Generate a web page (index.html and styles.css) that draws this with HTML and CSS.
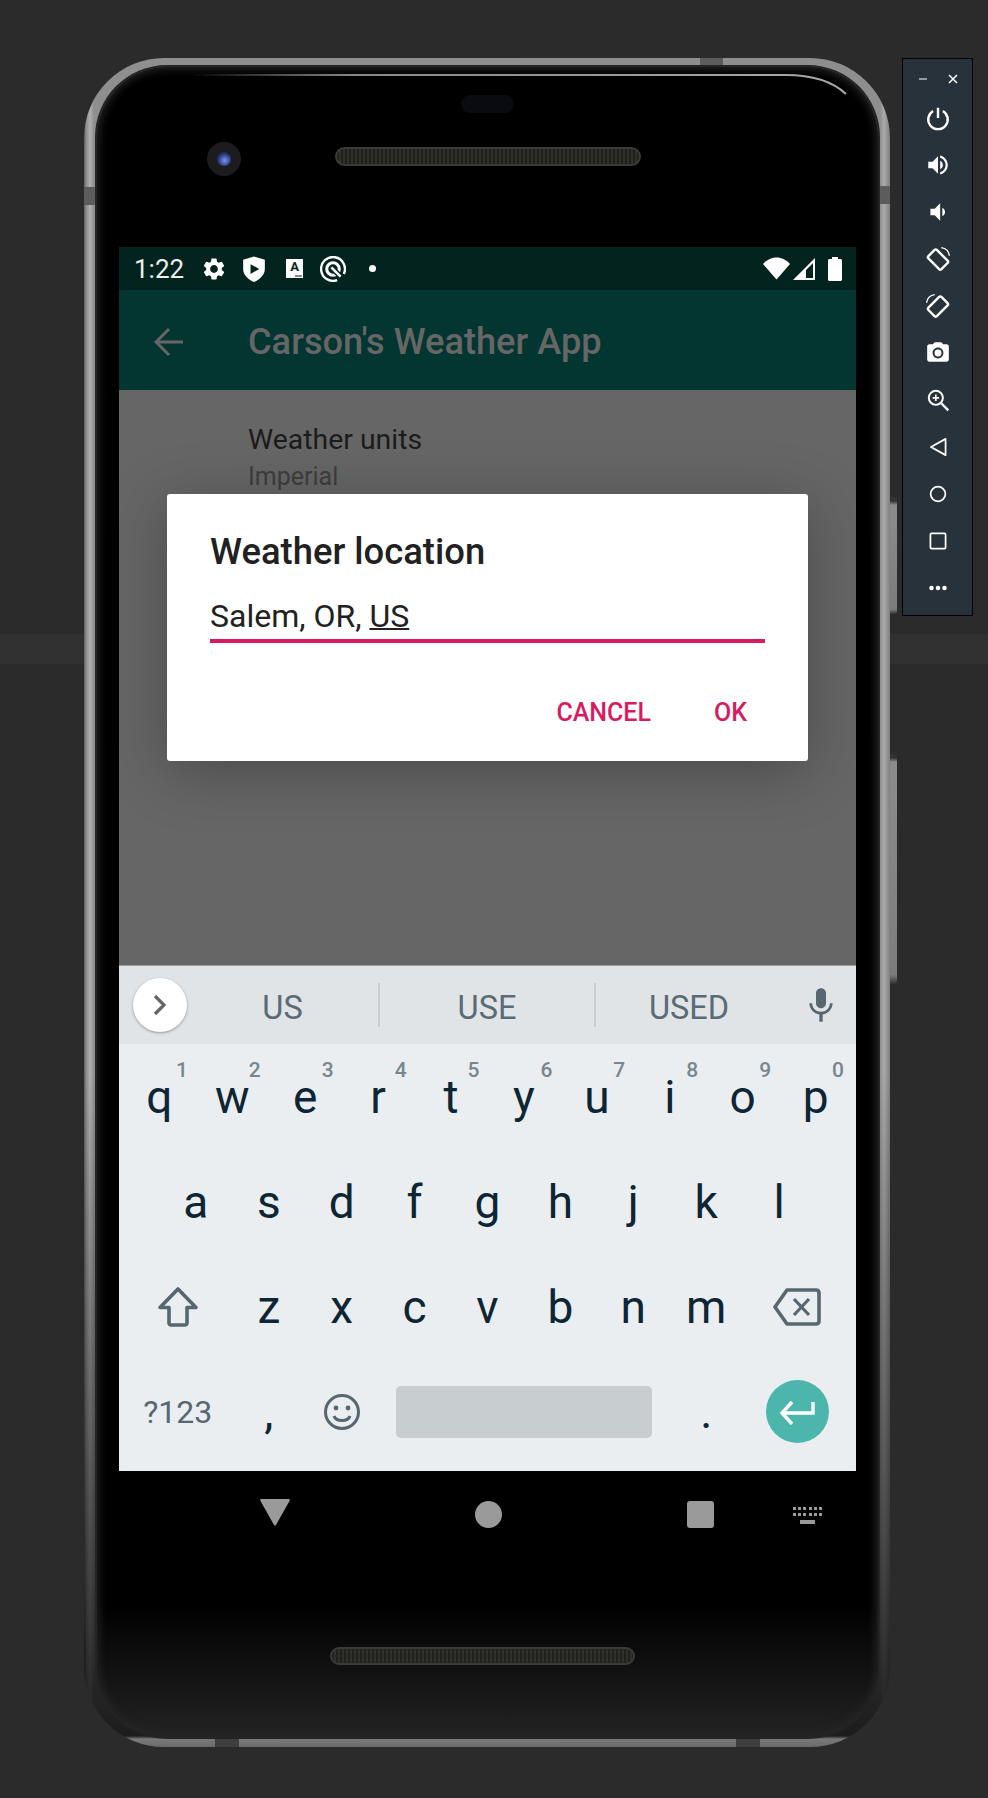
FILE: index.html
```html
<!DOCTYPE html>
<html lang="en">
<head>
	<meta charset="UTF-8">
	<title>Carson's Weather App</title>
	<link rel="stylesheet" href="styles.css">
</head>
<body>
<div class="phone">
	<!-- bits of the metal frame -->
	<span class="notch notch-left"></span>
	<span class="notch notch-right"></span>
	<span class="notch notch-top"></span>
	<span class="notch notch-bottom-a"></span>
	<span class="notch notch-bottom-b"></span>
	<span class="side-btn power-btn"></span>
	<span class="side-btn volume-btn"></span>

	<div class="bezel">
		<svg class="glass-line" width="782" height="40" viewBox="0 0 782 40">
			<defs>
				<linearGradient id="glassFade" x1="0" x2="1" y1="0" y2="0">
					<stop offset="0" stop-color="#999" stop-opacity="0"/>
					<stop offset="0.25" stop-color="#888"/>
					<stop offset="1" stop-color="#aaa"/>
				</linearGradient>
			</defs>
			<path d="M96 8 H690 C715 8 735 13 750 27" fill="none" stroke="url(#glassFade)" stroke-width="2"/>
		</svg>
		<div class="bezel-top">
			<div class="sensor"></div>
			<div class="bezel-row">
				<div class="camera"><span class="lens"></span></div>
				<div class="speaker speaker-top"></div>
			</div>
		</div>

		<div class="screen">
			<div class="status-bar">
				<span class="time">1:22</span>
				<svg class="st-icon gear" viewBox="0 0 24 24"><path d="M19.14 12.94c.04-.3.06-.61.06-.94 0-.32-.02-.64-.07-.94l2.03-1.58c.18-.14.23-.41.12-.61l-1.92-3.32c-.12-.22-.37-.29-.59-.22l-2.39.96c-.5-.38-1.03-.7-1.62-.94l-.36-2.54c-.04-.24-.24-.41-.48-.41h-3.84c-.24 0-.43.17-.47.41l-.36 2.54c-.59.24-1.13.57-1.62.94l-2.39-.96c-.22-.08-.47 0-.59.22L2.74 8.87c-.12.21-.08.47.12.61l2.03 1.58c-.05.3-.09.63-.09.94s.02.64.07.94l-2.03 1.58c-.18.14-.23.41-.12.61l1.92 3.32c.12.22.37.29.59.22l2.39-.96c.5.38 1.03.7 1.62.94l.36 2.54c.05.24.24.41.48.41h3.84c.24 0 .44-.17.47-.41l.36-2.54c.59-.24 1.13-.56 1.62-.94l2.39.96c.22.08.47 0 .59-.22l1.92-3.32c.12-.22.07-.47-.12-.61l-2.01-1.58zM12 15.6c-1.98 0-3.6-1.62-3.6-3.6s1.62-3.6 3.6-3.6 3.6 1.62 3.6 3.6-1.62 3.6-3.6 3.6z"/></svg>
				<svg class="st-icon shield" viewBox="0 0 24 24"><path fill-rule="evenodd" d="M12 .5 L22 3.500 V12 C22 17.500 17.500 21.500 12 24 C6.500 21.500 2 17.500 2 12 V3.500 Z M8.800 7.500 V16.500 L16.800 12 Z"/></svg>
				<span class="a-box">A<i></i></span>
				<svg class="st-icon q-icon" viewBox="0 0 24 24">
					<path d="M22 16.600 A11 11 0 1 0 15.800 22.300" fill="none" stroke="#fff" stroke-width="2.200"/>
					<circle cx="12" cy="12" r="5.800" fill="none" stroke="#fff" stroke-width="2.800"/>
					<path d="M10 10 L20 20" stroke="#03241e" stroke-width="5"/>
					<path d="M10.500 10.500 L19 19" stroke="#fff" stroke-width="2.400"/>
				</svg>
				<span class="st-dot"></span>
				<span class="st-right">
					<svg class="wifi" width="27" height="23" viewBox="0 0 27 23"><path d="M13.500 22.500 L0 7 C3.500 3 8.500 .5 13.500 .5 S23.500 3 27 7 Z"/></svg>
					<svg class="signal" width="22" height="22" viewBox="0 0 22 22"><path fill-rule="evenodd" d="M22 0 V22 H0 Z M20 5 L13 12 V20 H20 Z"/></svg>
					<svg class="battery" width="14" height="24" viewBox="0 0 14 24"><path d="M4 0 H10 V2 H12.500 C13.300 2 14 2.700 14 3.500 V22.500 C14 23.300 13.300 24 12.500 24 H1.500 C.7 24 0 23.300 0 22.500 V3.500 C0 2.700 .7 2 1.500 2 H4 Z"/></svg>
				</span>
			</div>

			<div class="app-bar">
				<svg class="back-arrow" width="30" height="30" viewBox="0 0 30 30"><path d="M29 15 H3 M15 2 L2 15 L15 28" fill="none" stroke="#666" stroke-width="3"/></svg>
				<span class="app-title">Carson's Weather App</span>
			</div>

			<main class="settings">
				<div class="pref-title">Weather units</div>
				<div class="pref-value">Imperial</div>

				<div class="dialog">
					<h2 class="dialog-title">Weather location</h2>
					<div class="dialog-input">Salem, OR, <u>US</u></div>
					<div class="dialog-actions">
						<span>CANCEL</span>
						<span>OK</span>
					</div>
				</div>
			</main>

			<div class="keyboard">
				<div class="suggestions">
					<div class="expand">
						<svg width="20" height="24" viewBox="0 0 20 24"><path d="M5 3 L14 12 L5 21" fill="none" stroke="#666" stroke-width="3.200"/></svg>
					</div>
					<span class="word word-first">US</span>
					<span class="word word-mid">USE</span>
					<span class="word word-last">USED</span>
					<svg class="mic" width="40" height="40" viewBox="0 0 24 24"><path d="M12 14c1.660 0 3-1.340 3-3V5c0-1.660-1.340-3-3-3S9 3.340 9 5v6c0 1.660 1.340 3 3 3zm5.300-3c0 3-2.540 5.100-5.300 5.100S6.700 14 6.700 11H5c0 3.410 2.720 6.230 6 6.720V22h2v-4.280c3.280-.48 6-3.300 6-6.720h-1.700z"/></svg>
				</div>

				<div class="key-row">
					<span class="key">q<sup>1</sup></span>
					<span class="key">w<sup>2</sup></span>
					<span class="key">e<sup>3</sup></span>
					<span class="key">r<sup>4</sup></span>
					<span class="key">t<sup>5</sup></span>
					<span class="key">y<sup>6</sup></span>
					<span class="key">u<sup>7</sup></span>
					<span class="key">i<sup>8</sup></span>
					<span class="key">o<sup>9</sup></span>
					<span class="key">p<sup>0</sup></span>
				</div>
				<div class="key-row row-home">
					<span class="key">a</span>
					<span class="key">s</span>
					<span class="key">d</span>
					<span class="key">f</span>
					<span class="key">g</span>
					<span class="key">h</span>
					<span class="key">j</span>
					<span class="key">k</span>
					<span class="key">l</span>
				</div>
				<div class="key-row row-shift">
					<span class="key">
						<svg width="44" height="44" viewBox="0 0 44 44"><path d="M22 4 L40 22.500 H31 V38 C31 39 30 40 29 40 H15 C14 40 13 39 13 38 V22.500 H4 Z" fill="none" stroke="#566770" stroke-width="3.600" stroke-linejoin="round"/></svg>
					</span>
					<span class="key">z</span>
					<span class="key">x</span>
					<span class="key">c</span>
					<span class="key">v</span>
					<span class="key">b</span>
					<span class="key">n</span>
					<span class="key">m</span>
					<span class="key">
						<svg width="48" height="38" viewBox="0 0 48 38"><path d="M14 2 H43 C45 2 46 3 46 5 V33 C46 35 45 36 43 36 H14 L2 19 Z" fill="none" stroke="#566770" stroke-width="3.600" stroke-linejoin="round"/><path d="M21 11 L36 27 M36 11 L21 27" stroke="#566770" stroke-width="3.200"/></svg>
					</span>
				</div>
				<div class="key-row row-bottom">
					<span class="key key-symbols">?123</span>
					<span class="key">,</span>
					<span class="key">
						<svg width="38" height="38" viewBox="0 0 38 38"><circle cx="19" cy="19" r="16.500" fill="none" stroke="#566770" stroke-width="3"/><circle cx="13" cy="15" r="2.400" fill="#566770"/><circle cx="25" cy="15" r="2.400" fill="#566770"/><path d="M11 23 C13 29 25 29 27 23" fill="none" stroke="#566770" stroke-width="3"/></svg>
					</span>
					<span class="key"><span class="space-bar"></span></span>
					<span class="key">.</span>
					<span class="key">
						<span class="enter">
							<svg width="36" height="26" viewBox="0 0 36 26"><path d="M34 3 V14 H4 M13 3 L3 14 L13 25" fill="none" stroke="#fff" stroke-width="3.400"/></svg>
						</span>
					</span>
				</div>
			</div>
		</div>

		<div class="nav-bar">
			<svg class="nav-back" width="30" height="27" viewBox="0 0 30 27"><path d="M1 0 H29 C30 0 30 1 29.500 2 L16 26 C15.500 27 14.500 27 14 26 L.5 2 C0 1 0 0 1 0 Z"/></svg>
			<span class="nav-home"></span>
			<span class="nav-recent"></span>
			<svg class="nav-ime" width="29" height="17" viewBox="0 0 29 17">
				<path d="M0 0h3v3H0zM5 0h3v3H5zM10 0h3v3h-3zM16 0h3v3h-3zM21 0h3v3h-3zM26 0h3v3h-3zM0 6h3v3H0zM5 6h3v3H5zM10 6h3v3h-3zM16 6h3v3h-3zM21 6h3v3h-3zM26 6h3v3h-3zM7 13h15v4H7z"/>
			</svg>
		</div>

		<div class="speaker speaker-bottom"></div>
	</div>
</div>

<aside class="emu-panel">
	<div class="emu-head">
		<svg width="14" height="14" viewBox="0 0 14 14"><path d="M3 7 H11" stroke="#b5bcc0" stroke-width="1.500"/></svg>
		<svg width="14" height="14" viewBox="0 0 14 14"><path d="M3 3 L11 11 M11 3 L3 11" stroke="#fff" stroke-width="1.500"/></svg>
	</div>
	<svg class="emu-icon" viewBox="0 0 24 24"><path d="M12 2.500 V12 M7.500 5.500 A9 9 0 1 0 16.500 5.500" fill="none" stroke="#fff" stroke-width="2.200"/></svg>
	<svg class="emu-icon" viewBox="0 0 24 24"><path d="M3 9v6h4l5 5V4L7 9H3zm13.500 3c0-1.770-1.020-3.290-2.500-4.030v8.050c1.480-.73 2.500-2.250 2.500-4.020z"/><path d="M14 3.230v2.060c2.890.86 5 3.540 5 6.710s-2.110 5.850-5 6.710v2.060c4.010-.91 7-4.490 7-8.770s-2.990-7.860-7-8.770z"/></svg>
	<svg class="emu-icon" viewBox="0 0 24 24"><path d="M18.500 12c0-1.770-1.020-3.290-2.500-4.030v8.050c1.480-.73 2.500-2.250 2.500-4.020zM5 9v6h4l5 5V4L9 9H5z"/></svg>
	<svg class="emu-icon" viewBox="0 0 24 24"><rect x="6.500" y="4" width="11" height="17" rx="1.500" transform="rotate(-45 12 12.500)" fill="none" stroke="#fff" stroke-width="2.200"/><path d="M15 1.500 C19 2 22 5 22.500 9" fill="none" stroke="#fff" stroke-width="1.300"/></svg>
	<svg class="emu-icon" viewBox="0 0 24 24"><rect x="6.500" y="4" width="11" height="17" rx="1.500" transform="rotate(45 12 12.500)" fill="none" stroke="#fff" stroke-width="2.200"/><path d="M9 1.500 C5 2 2 5 1.500 9" fill="none" stroke="#fff" stroke-width="1.300"/></svg>
	<svg class="emu-icon" viewBox="0 0 24 24"><circle cx="12" cy="12" r="3.200"/><path d="M9 2L7.170 4H4c-1.100 0-2 .9-2 2v12c0 1.100.9 2 2 2h16c1.100 0 2-.9 2-2V6c0-1.100-.9-2-2-2h-3.170L15 2H9zm3 15c-2.760 0-5-2.240-5-5s2.240-5 5-5 5 2.240 5 5-2.240 5-5 5z"/></svg>
	<svg class="emu-icon" viewBox="0 0 24 24"><circle cx="10" cy="10" r="6.500" fill="none" stroke="#fff" stroke-width="1.800"/><path d="M15 15 L21.500 21.500" stroke="#fff" stroke-width="2.200"/><path d="M10 7 V13 M7 10 H13" stroke="#fff" stroke-width="1.500"/></svg>
	<svg class="emu-icon" viewBox="0 0 24 24"><path d="M19 4.500 V19.500 L5.500 12 Z" fill="none" stroke="#fff" stroke-width="1.600" stroke-linejoin="round"/></svg>
	<svg class="emu-icon" viewBox="0 0 24 24"><circle cx="12" cy="12" r="6.800" fill="none" stroke="#fff" stroke-width="1.600"/></svg>
	<svg class="emu-icon" viewBox="0 0 24 24"><rect x="5" y="5" width="14" height="14" rx="1" fill="none" stroke="#fff" stroke-width="1.600"/></svg>
	<svg class="emu-icon" viewBox="0 0 24 24"><circle cx="6" cy="12" r="2.100"/><circle cx="12" cy="12" r="2.100"/><circle cx="18" cy="12" r="2.100"/></svg>
</aside>
</body>
</html>
```

FILE: styles.css
```css
* {
	box-sizing: border-box;
}

body {
	margin: 0;
	height: 1798px;
	padding: 58px 0 0 84px;
	display: flex;
	align-items: flex-start;
	overflow: hidden;
	font-family: Roboto, "Liberation Sans", sans-serif;
	/* the lighter strip behind the phone */
	background: linear-gradient(#2b2b2b 634px, #313131 634px, #313131 664px, #2b2b2b 664px);
}

/* ---------- phone hardware ---------- */
.phone {
	position: relative;
	width: 806px;
	height: 1689px;
	padding: 9px 12px 10px 13px;
	border-radius: 80px;
	background:
		linear-gradient(rgba(0, 0, 0, 0) 60%, rgba(0, 0, 0, .8) calc(100% - 11px), rgba(0, 0, 0, .15) calc(100% - 8px), rgba(0, 0, 0, .25) 100%),
		linear-gradient(90deg, #5a5a5a, #8a8a8a 2px, #b0b0b0 6px, #8f8f8f 10px, #8e8e8e 796px, #aaa 800px, #808080);
}

.bezel {
	position: relative;
	height: 100%;
	padding: 0 22px;
	border-radius: 70px;
	background: linear-gradient(#000 92%, #232323 100%);
	box-shadow: 0 0 0 2px #242424, inset 0 0 8px 2px #262626;
}

.glass-line {
	position: absolute;
	top: 0;
	left: -1px;
}

.notch {
	position: absolute;
	background: #5c5c5c;
}

.notch-left {
	top: 129px;
	left: 0;
	width: 12px;
	height: 18px;
}

.notch-right {
	top: 128px;
	right: 0;
	width: 11px;
	height: 18px;
}

.notch-top {
	top: 0;
	left: 616px;
	width: 23px;
	height: 8px;
}

.notch-bottom-a,
.notch-bottom-b {
	bottom: 0;
	width: 24px;
	height: 9px;
	background: #3e3e3e;
}

.notch-bottom-a {
	left: 131px;
}

.notch-bottom-b {
	left: 652px;
}

.side-btn {
	position: absolute;
	right: -7px;
	width: 7px;
	border-radius: 0 3px 3px 0;
	background: linear-gradient(#333 4px, #8c8c8c 8px, #7c7c7c 96%, #333);
}

.power-btn {
	top: 439px;
	height: 117px;
}

.volume-btn {
	top: 696px;
	height: 230px;
}

.bezel-top {
	height: 180px;
	padding-top: 28px;
}

.sensor {
	width: 53px;
	height: 18px;
	margin: 0 auto;
	border-radius: 9px;
	background: #0a0b10;
}

.bezel-row {
	display: flex;
	align-items: flex-start;
	margin-top: 29px;
	padding-left: 88px;
}

.camera {
	display: flex;
	align-items: center;
	justify-content: center;
	width: 34px;
	height: 34px;
	border-radius: 50%;
	background: #1c1c1f;
}

.lens {
	width: 14px;
	height: 14px;
	border-radius: 50%;
	background: radial-gradient(circle at 55% 60%, #7f96e8, #27387e 55%, #0b0f25);
}

.speaker {
	border: 2px solid #3a3a38;
	border-radius: 10px;
	background: repeating-linear-gradient(90deg, #20201d 0, #20201d 2px, #2f2f2b 2px, #2f2f2b 4px);
}

.speaker-top {
	width: 306px;
	height: 19px;
	margin: 5px 0 0 94px;
}

.speaker-bottom {
	width: 305px;
	height: 18px;
	margin: 88px 0 0 211px;
}

/* ---------- screen ---------- */
.screen {
	display: flex;
	flex-direction: column;
	width: 737px;
	height: 1224px;
}

.status-bar {
	display: flex;
	align-items: center;
	height: 43px;
	padding: 0 14px 0 15px;
	background: #03241e;
}

.time {
	width: 67px;
	color: #eee;
	font-size: 26px;
}

.st-icon {
	width: 26px;
	height: 26px;
	margin-right: 14px;
	fill: #fff;
}

.a-box {
	position: relative;
	width: 17px;
	height: 19px;
	margin: 0 17px 0 5px;
	background: #fff;
	color: #03241e;
	font-size: 13px;
	font-weight: 700;
	line-height: 16px;
	text-align: center;
}

.a-box i {
	position: absolute;
	right: 1px;
	bottom: 1px;
	width: 7px;
	height: 2px;
	background: #888;
}

.st-dot {
	width: 7px;
	height: 7px;
	margin-left: 9px;
	border-radius: 50%;
	background: #fff;
}

.st-right {
	display: flex;
	align-items: center;
	margin-left: auto;
}

.st-right svg {
	fill: #fff;
}

.signal {
	margin: 0 13px 0 3px;
}

.app-bar {
	display: flex;
	align-items: center;
	height: 100px;
	padding-top: 3px;
	background: #033630;
}

.back-arrow {
	margin-left: 35px;
}

.app-title {
	margin-left: 64px;
	color: #666;
	font-size: 36.2px;
	font-weight: 500;
}

.settings {
	position: relative;
	flex: 1;
	padding: 33px 0 0 129px;
	background: #666;
}

.pref-title {
	color: #1c1c1c;
	font-size: 28.4px;
	line-height: 34px;
}

.pref-value {
	margin-top: 5px;
	color: #3e3e3e;
	font-size: 25px;
	line-height: 30px;
}

.dialog {
	position: absolute;
	top: 104px;
	left: 48px;
	width: 641px;
	height: 267px;
	padding: 36px 43px 0;
	border-radius: 3px;
	background: #fff;
	box-shadow: 0 10px 60px rgba(0, 0, 0, .28);
}

.dialog-title {
	margin: 0;
	color: #212121;
	font-size: 36.4px;
	font-weight: 500;
	line-height: 44px;
}

.dialog-input {
	margin-top: 22px;
	padding-bottom: 3px;
	border-bottom: 4px solid #d81b60;
	color: #212121;
	font-size: 32px;
	line-height: 40px;
}

.dialog-input u {
	text-decoration-thickness: 1.5px;
}

.dialog-actions {
	display: flex;
	justify-content: flex-end;
	gap: 63px;
	margin: 55px 18px 0 0;
	color: #d81b60;
	font-size: 25px;
	font-weight: 500;
	line-height: 30px;
}

/* ---------- keyboard ---------- */
.keyboard {
	height: 506px;
	background: #eaeef1;
}

.suggestions {
	display: flex;
	align-items: center;
	height: 79px;
	padding: 0 0 0 14px;
	border-top: 1px solid #9b9fa2;
	background: #e1e4e7;
}

.expand {
	display: flex;
	align-items: center;
	justify-content: center;
	flex: none;
	width: 54px;
	height: 54px;
	border-radius: 50%;
	background: #fff;
	box-shadow: 0 1px 3px rgba(0, 0, 0, .35);
}

.word {
	height: 44px;
	padding-top: 3px;
	color: #5a6b75;
	font-size: 32.5px;
	line-height: 44px;
	text-align: center;
}

.word-first {
	width: 191px;
}

.word-mid {
	width: 216px;
	border-left: 2px solid #c9ced1;
}

.word-last {
	width: 188px;
	border-left: 2px solid #c9ced1;
}

.mic {
	margin-left: 19px;
	fill: #566770;
}

.key-row {
	display: grid;
	grid-template-columns: repeat(10, 1fr);
	height: 105px;
	padding: 0 4px;
}

.row-home {
	padding: 0 40.45px;
	grid-template-columns: repeat(9, 1fr);
}

.row-shift {
	grid-template-columns: 1.5fr repeat(7, 1fr) 1.5fr;
}

.row-bottom {
	grid-template-columns: 3fr 2fr 2fr 8fr 2fr 3fr;
}

.key {
	position: relative;
	display: flex;
	align-items: center;
	justify-content: center;
	color: #0e2533;
	font-size: 46px;
}

.key sup {
	position: absolute;
	top: 14px;
	right: 8px;
	color: #78868e;
	font-size: 21px;
	font-weight: 500;
	line-height: 24px;
}

.key-symbols {
	color: #566770;
	font-size: 32px;
}

.space-bar {
	width: 256px;
	height: 52px;
	border-radius: 5px;
	background: #c8cdd0;
}

.enter {
	display: flex;
	align-items: center;
	justify-content: center;
	width: 63px;
	height: 63px;
	border-radius: 50%;
	background: #4db6ac;
}

/* ---------- nav bar under the screen ---------- */
.nav-bar {
	display: flex;
	align-items: center;
	width: 737px;
	height: 88px;
}

.nav-bar svg {
	fill: #9a9a9a;
}

.nav-back {
	margin: -5px 0 0 141px;
}

.nav-home {
	width: 27px;
	height: 27px;
	margin: -2px 0 0 185px;
	border-radius: 50%;
	background: #9a9a9a;
}

.nav-recent {
	width: 27px;
	height: 27px;
	margin: -2px 0 0 185px;
	border-radius: 3px;
	background: #9a9a9a;
}

.nav-ime {
	margin-left: 79px;
}

/* ---------- emulator toolbar ---------- */
.emu-panel {
	display: flex;
	flex-direction: column;
	align-items: center;
	width: 71px;
	height: 558px;
	margin-left: 12px;
	border: 1px solid #000;
	background: #27323a;
}

.emu-head {
	display: flex;
	flex: none;
	justify-content: center;
	gap: 16px;
	height: 46px;
	padding-top: 13px;
}

.emu-icon {
	flex: none;
	width: 26px;
	height: 26px;
	margin-bottom: 21px;
	fill: #fff;
}
```
